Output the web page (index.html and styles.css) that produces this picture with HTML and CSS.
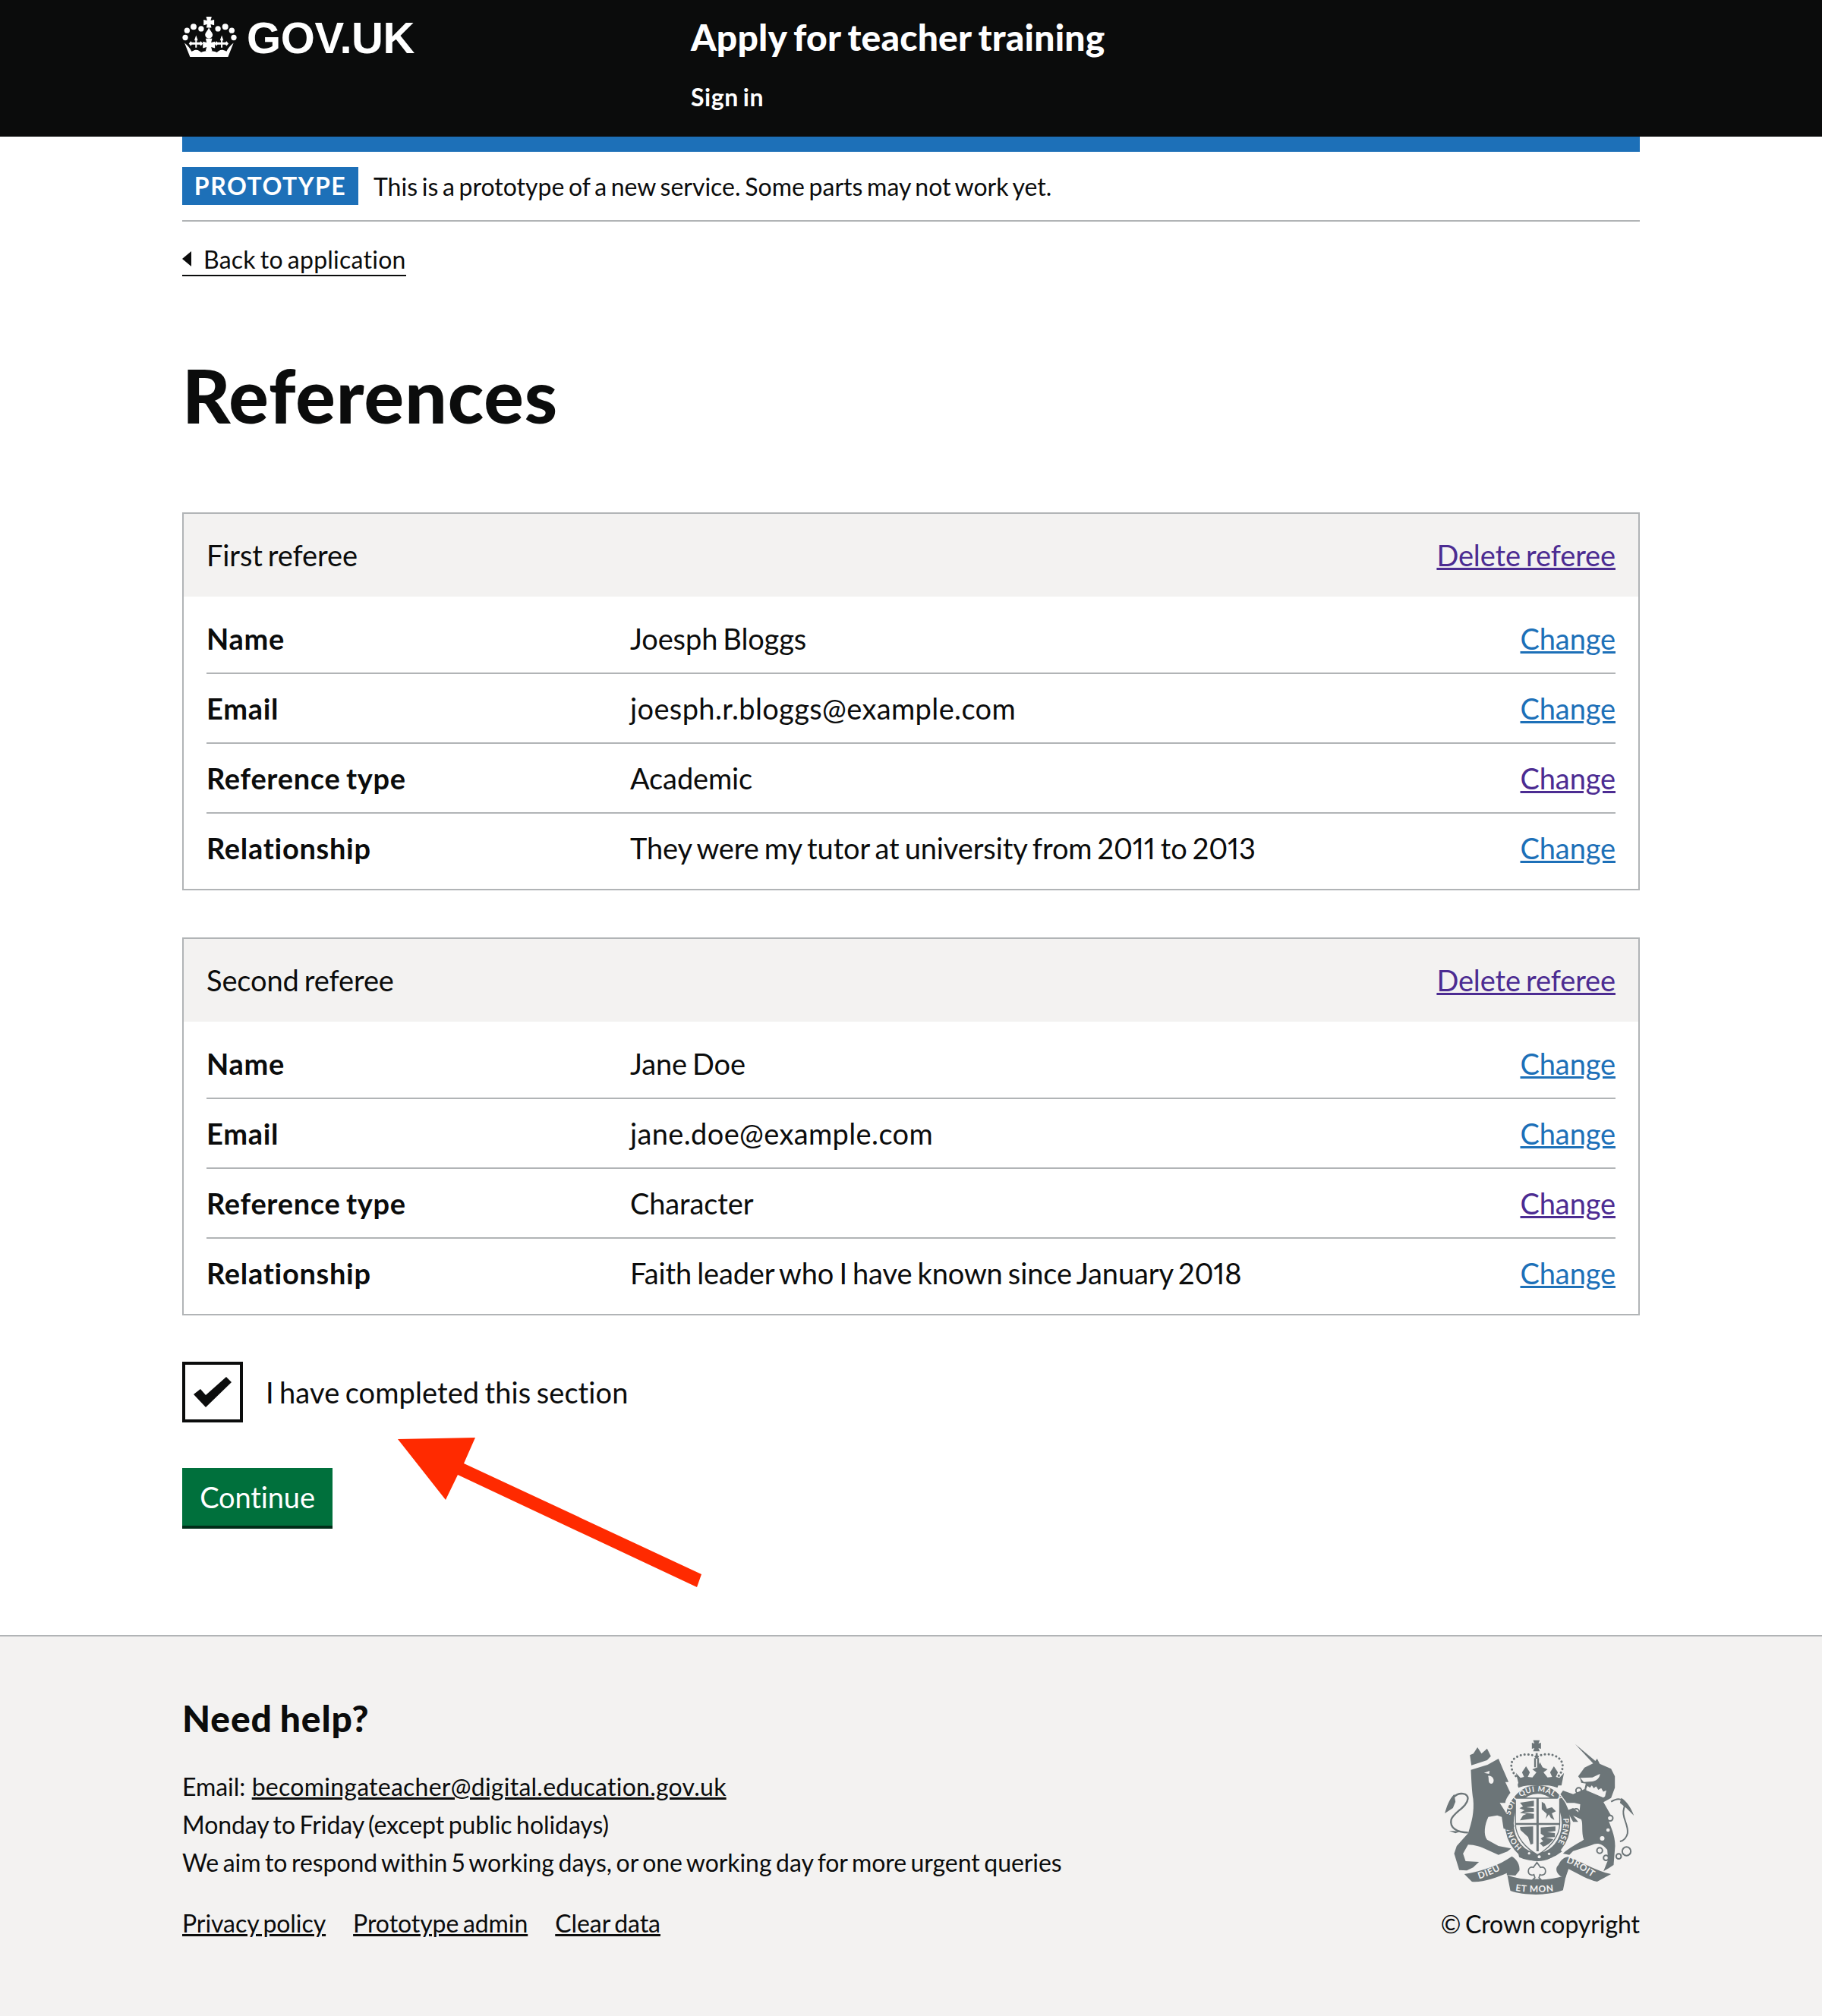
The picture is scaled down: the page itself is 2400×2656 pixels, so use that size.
FILE: index.html
```html
<!DOCTYPE html>
<html lang="en">
<head>
    <meta charset="UTF-8">
    <title>References</title>
    <link rel="stylesheet" href="styles.css">
</head>
<body>
    <header class="site-header">
        <div class="logo">
            <svg class="crown" viewBox="23 8 217 160" fill="#fff">
                <!-- orb cross and drop -->
                <path d="M118 8h22l-4 15 14-3v22l-14-4 3 14h-20l3-14-14 4V20l14 3z"/>
                <path d="M129 50c4 14 15 20 15 30a15 15 0 0 1-30 0c0-10 11-16 15-30z"/>
                <circle cx="68" cy="48" r="12"/><circle cx="98" cy="56" r="11"/>
                <circle cx="165" cy="56" r="11"/><circle cx="194" cy="48" r="12"/>
                <circle cx="42" cy="63" r="11"/><circle cx="220" cy="63" r="11"/>
                <circle cx="35" cy="91" r="11"/><circle cx="228" cy="91" r="11"/>
                <!-- fleurs -->
                <path d="M78 82l7 20h-4v8h12l4-5 8 10-8 9-4-5H81v12h-6v-12H61l-4 5-8-9 8-10 4 5h14v-8h-4z"/>
                <path d="M180 82l7 20h-4v8h12l4-5 8 10-8 9-4-5h-12v12h-6v-12h-14l-4 5-8-9 8-10 4 5h14v-8h-4z"/>
                <path d="M116 95h26l-4 16 15-4v26l-15-4 4 15h-26l4-15-15 4v-26l15 4z"/>
                <!-- bowl -->
                <path d="M32 112c12 10 22 20 28 34 8-4 14-6 18-6 10 0 16 6 20 10 10-4 20-6 31-6s22 2 32 6c4-4 10-10 20-10 4 0 10 2 18 6 6-14 16-24 28-34l-22 56H54z"/>
            </svg>
            <span class="logo-text">GOV.UK</span>
        </div>
        <div class="service">
            <div class="service-name">Apply for teacher training</div>
            <div class="service-nav">Sign in</div>
        </div>
    </header>

    <div class="wrapper">
        <div class="blue-bar"></div>
        <div class="phase-banner">
            <strong class="tag">PROTOTYPE</strong>
            <span>This is a prototype of a new service. Some parts may not work yet.</span>
        </div>
        <a class="back-link" href="#"><span class="back-arrow"></span>Back to application</a>

        <h1>References</h1>

        <section class="card">
            <div class="card-head">
                <span>First referee</span>
                <a class="visited" href="#">Delete referee</a>
            </div>
            <div class="card-body">
                <div class="row"><b>Name</b><span>Joesph Bloggs</span><a href="#">Change</a></div>
                <div class="row"><b>Email</b><span class="email">joesph.r.bloggs@example.com</span><a href="#">Change</a></div>
                <div class="row"><b>Reference type</b><span>Academic</span><a class="visited" href="#">Change</a></div>
                <div class="row"><b>Relationship</b><span>They were my tutor at university from 2011 to 2013</span><a href="#">Change</a></div>
            </div>
        </section>

        <section class="card">
            <div class="card-head">
                <span>Second referee</span>
                <a class="visited" href="#">Delete referee</a>
            </div>
            <div class="card-body">
                <div class="row"><b>Name</b><span>Jane Doe</span><a href="#">Change</a></div>
                <div class="row"><b>Email</b><span class="email">jane.doe@example.com</span><a href="#">Change</a></div>
                <div class="row"><b>Reference type</b><span>Character</span><a class="visited" href="#">Change</a></div>
                <div class="row"><b>Relationship</b><span>Faith leader who I have known since January 2018</span><a href="#">Change</a></div>
            </div>
        </section>

        <div class="complete">
            <div class="checkbox">
                <svg viewBox="0 0 50 40" fill="#0b0c0c"><path d="M0 23l9-7 7 8L43 0l7 7-34 33z"/></svg>
            </div>
            <span>I have completed this section</span>
        </div>
        <a class="button" href="#">Continue</a>
    </div>

    <svg class="arrow" viewBox="0 0 2400 2656"><path fill="#ff2a00" d="M524 1896L626 1894 611 1928 924 2074 918 2091 603 1943 587 1976z"/></svg>

    <footer class="site-footer">
        <div class="footer-main">
            <div>
                <h2>Need help?</h2>
                <p>Email: <a class="email" href="#">becomingateacher@digital.education.gov.uk</a></p>
                <p>Monday to Friday (except public holidays)</p>
                <p>We aim to respond within 5 working days, or one working day for more urgent queries</p>
                <ul class="footer-links">
                    <li><a href="#">Privacy policy</a></li>
                    <li><a href="#">Prototype admin</a></li>
                    <li><a href="#">Clear data</a></li>
                </ul>
            </div>
            <div class="crest-col">
                <svg class="crest" viewBox="130 95 752 612" fill="#6c7578">
                    <defs>
                        <path id="garter-top" d="M392 400C395 340 445 300 500 300S610 345 612 405"/>
                        <path id="garter-right" d="M600 400C606 450 590 500 560 530"/>
                        <path id="garter-left" d="M440 520C415 500 400 470 398 440"/>
                        <path id="ribbon-left" d="M268 645C310 632 350 615 385 590"/>
                        <path id="ribbon-right" d="M612 580C650 590 690 625 732 648"/>
                        <path id="ribbon-mid" d="M412 692C460 700 540 700 590 688"/>
                    </defs>

                    <!-- royal crown -->
                    <path d="M482 97h26l-5 13 10-3v24l-10-3 5 13h-26l5-13-10 3v-24l10 3z"/>
                    <path d="M486 168h7v36h-7zM498 168h7v36h-7z"/>
                    <g fill="none" stroke="#6c7578" stroke-width="9" stroke-linecap="round" stroke-dasharray="0.1 15">
                        <path d="M492 162C475 150 430 148 405 172 388 192 395 220 420 246"/>
                        <path d="M500 162C520 148 565 148 588 172 608 195 598 225 575 246"/>
                    </g>
                    <path d="M492 148h8v22h-8z"/>
                    <path d="M414 226l18 20 14-4-8-18 16-24 15 24-8 18 18 2 16-20-16-12 20-8 10-20 10 20 20 8-16 12 16 20 18-2-8-18 15-24 16 24-8 18 14 4 18-20-10 50H426z"/>
                    <path d="M424 285c-6-14-2-20 6-24 46-14 96-14 142 0 8 4 12 10 6 24-50-18-104-18-154 0z"/>

                    <!-- garter and shield -->
                    <ellipse cx="500" cy="425" rx="112" ry="133" fill="none" stroke="#6c7578" stroke-width="34"/>
                    <path d="M412 326h175v100c0 56-44 100-88 124-42-24-87-68-87-124z" fill="#f3f2f1" stroke="#6c7578" stroke-width="4"/>
                    <path d="M495 326h9v210h-9zM412 424h175v8H412z"/>
                    <path d="M430 344l55-8v22l-30 4 30 4v14l-40 2 40 6v18l-55 8 12-20 14-6-26-4 18-10-20-8 14-8z"/>
                    <path d="M516 340l12 8 8 20 20-6 16 16-16 8 10 26-14-8-8-14-12 18 4-20-20-18z"/>
                    <path d="M430 440l52-2v68l-10 4-10-30-30-28z"/>
                    <path d="M512 442l58-4v18l-32 4 30 4v16l-36 2 30 6c-10 14-24 24-40 30l-14-14 14-8-10-10 14-10-14-10z"/>
                    <path d="M424 530l6 26c40 18 96 18 140-6l20-14-6-6c-40 30-118 30-160 0z" stroke="#6c7578" stroke-width="8"/>
                    <circle cx="466" cy="544" r="5" fill="#f3f2f1"/><circle cx="506" cy="558" r="6" fill="#f3f2f1"/><circle cx="545" cy="546" r="5" fill="#f3f2f1"/>
                    <text class="crest-text crest-small"><textPath href="#garter-top" startOffset="2%">SOIT QUI MAL Y</textPath></text>
                    <text class="crest-text crest-small"><textPath href="#garter-right" startOffset="4%">PENSE</textPath></text>
                    <text class="crest-text crest-small"><textPath href="#garter-left" startOffset="2%">HONI</textPath></text>

                    <!-- lion -->
                    <path d="M236 214L302 194 345 170 362 210 385 262 372 262 392 305C380 320 372 335 372 345L350 345 408 436 396 456 365 446 358 400 340 394 305 400C290 430 285 470 300 490L345 515 395 525 380 537 345 550 300 530C280 520 250 510 225 510L205 545 215 575 268 578 245 600 220 612 190 610 170 545 180 515 225 465C240 420 250 380 245 330 240 300 238 260 236 214z"/>
                    <path d="M238 196L232 156 246 150 262 125 278 150 300 130 315 160 300 176z"/>
                    <path d="M288 226l22-8-2 12zM304 238c10-2 22 6 22 18 0 12-10 16-16 10-6-6-2-18-6-28z" fill="#f3f2f1"/>
                    <g fill="none" stroke="#6c7578" stroke-width="7">
                        <path d="M225 462C180 462 152 442 158 412 166 382 222 362 224 328 224 306 190 300 168 322"/>
                    </g>
                    <path d="M170 310C150 330 140 360 133 386L165 365 175 340zM150 455l45 2-20 8z"/>

                    <!-- unicorn -->
                    <path d="M648 112L735 185 722 192z"/>
                    <path d="M660 240L685 205 720 188 735 170 745 190 790 210 805 240 805 285 790 325 760 342 790 395 775 400C788 440 806 470 806 515L800 590 782 602 760 615 778 570 775 530C755 505 735 500 712 512L640 535 625 550 600 545C625 520 660 505 682 490 672 460 680 425 672 410L640 395 660 420 640 420 615 375 640 365 665 385 668 350 645 345 615 345 590 310 600 296 640 310 685 290 690 268 672 265 668 250z"/>
                    <path d="M690 288l6-14 10 8 8-10 8 12 10-8 8 14 12-6 8 14 14-6-6 28-8 6-70-30z" fill="#f3f2f1" stroke="#6c7578" stroke-width="4"/>
                    <path d="M668 246l48-2 30-14c0 14-12 28-30 30l-34 2z" fill="#f3f2f1"/>
                    <circle cx="755" cy="485" r="9" fill="#f3f2f1"/><circle cx="778" cy="452" r="7" fill="#f3f2f1"/>
                    <g fill="none" stroke="#6c7578" stroke-width="6">
                        <path d="M790 340C830 315 850 340 840 370 830 400 860 430 855 465 852 480 840 495 825 497"/>
                        <circle cx="662" cy="296" r="11"/><circle cx="652" cy="380" r="12"/><circle cx="786" cy="405" r="11"/>
                        <circle cx="745" cy="533" r="11"/><circle cx="770" cy="562" r="10"/><circle cx="820" cy="556" r="10"/><circle cx="851" cy="536" r="17"/>
                    </g>
                    <path d="M830 325C850 335 870 365 880 395L850 365 825 345z"/>

                    <!-- motto -->
                    <path d="M210 626C280 615 350 590 398 556 420 570 430 590 428 612L412 632 378 630 378 622C340 640 280 660 240 656z"/>
                    <path d="M582 590C590 572 604 560 620 558 680 580 730 615 790 626L735 656C700 650 660 625 622 606L610 640 590 634C570 620 570 600 582 590z"/>
                    <path d="M380 630C440 655 550 655 612 630L600 690C540 712 450 712 392 692z"/>
                    <path d="M497 580l14 20c10-4 20 2 20 14 0 16-14 18-22 14l-4 12 8 8h-32l8-8-4-12c-8 4-22 2-22-14 0-12 10-18 20-14z" fill="#f3f2f1" stroke="#6c7578" stroke-width="5"/>
                    <text class="crest-text"><textPath href="#ribbon-left">DIEU</textPath></text>
                    <text class="crest-text"><textPath href="#ribbon-right">DROIT</textPath></text>
                    <text class="crest-text"><textPath href="#ribbon-mid">ET MON</textPath></text>
                </svg>
                <div class="copyright">© Crown copyright</div>
            </div>
        </div>
    </footer>
</body>
</html>
```

FILE: styles.css
```css
* {
    box-sizing: border-box;
}
body {
    margin: 0;
    font-family: "Lato", sans-serif;
    font-size: 38px;
    letter-spacing: -0.12px;
    word-spacing: -2.5px;
    font-variant-numeric: proportional-nums;
    color: #0b0c0c;
    background: #fff;
    position: relative;
}
a {
    color: #1d70b8;
}
a.visited {
    color: #4c2c92;
}
.site-header {
    height: 180px;
    background: #0b0c0c;
    color: #fff;
    padding: 0 240px;
    display: flex;
}
.logo {
    width: 670px;
    display: flex;
    align-items: flex-start;
    padding-top: 22px;
}
.crown {
    width: 72px;
    height: 53px;
}
.logo-text {
    font-family: "Liberation Sans", sans-serif;
    font-weight: 700;
    font-size: 58px;
    line-height: 56px;
    margin-left: 13px;
    letter-spacing: -0.4px;
    word-spacing: 0;
}
.service-name {
    font-weight: 900;
    font-size: 48px;
    line-height: 60px;
    padding-top: 19px;
    letter-spacing: 0.2px;
}
.service-nav {
    font-weight: 700;
    font-size: 32px;
    line-height: 40px;
    letter-spacing: 0.6px;
    margin-top: 29px;
}
.wrapper {
    width: 1920px;
    margin: 0 auto;
    padding-bottom: 140px;
}
.blue-bar {
    height: 20px;
    background: #1d70b8;
}
.phase-banner {
    display: flex;
    align-items: center;
    height: 92px;
    border-bottom: 2px solid #b1b4b6;
    padding-bottom: 20px;
    padding-top: 20px;
    font-size: 32px;
    letter-spacing: 0;
}
.tag {
    background: #1d70b8;
    color: #fff;
    width: 232px;
    height: 50px;
    line-height: 50px;
    text-align: center;
    letter-spacing: 1.5px;
    font-size: 32px;
    margin-right: 20px;
}
.back-link {
    display: inline-flex;
    align-items: center;
    margin-top: 30px;
    height: 42px;
    padding-bottom: 2px;
    font-size: 32px;
    letter-spacing: 0.25px;
    color: #0b0c0c;
    text-decoration: none;
    border-bottom: 2px solid #0b0c0c;
}
.back-arrow {
    width: 0;
    height: 0;
    border-top: 10px solid transparent;
    border-bottom: 10px solid transparent;
    border-right: 12px solid #0b0c0c;
    margin-right: 16px;
}
h1 {
    font-size: 98px;
    font-weight: 900;
    line-height: 100px;
    letter-spacing: 1px;
    margin: 106px 0 105px;
}
.card {
    border: 2px solid #b1b4b6;
    margin-bottom: 62px;
}
.card-head {
    height: 109px;
    background: #f3f2f1;
    padding: 0 30px 2px;
    display: flex;
    justify-content: space-between;
    align-items: center;
}
.card-body {
    padding: 10px 30px 7px;
}
.row {
    display: flex;
    height: 92px;
    padding-bottom: 1px;
    align-items: center;
    border-bottom: 2px solid #b1b4b6;
}
.row:last-child {
    border-bottom: 0;
    padding-bottom: 3px;
}
.row b {
    width: 558px;
    letter-spacing: 0.7px;
}
.row span {
    flex: 1;
}
.row .email {
    letter-spacing: 0.37px;
}
.complete {
    display: flex;
    align-items: center;
    height: 80px;
    margin-top: -1px;
    letter-spacing: 0.1px;
}
.checkbox {
    width: 80px;
    height: 80px;
    border: 4px solid #0b0c0c;
    margin-right: 30px;
    display: flex;
    align-items: center;
    justify-content: center;
}
.checkbox svg {
    width: 50px;
    height: 40px;
}
.button {
    display: block;
    width: 198px;
    height: 80px;
    margin-top: 60px;
    line-height: 76px;
    text-align: center;
    color: #fff;
    text-decoration: none;
    background: #00703c;
    box-shadow: inset 0 -4px 0 #002d18;
}
.arrow {
    position: absolute;
    left: 0;
    top: 0;
    width: 2400px;
    height: 2656px;
    pointer-events: none;
}
.site-footer {
    background: #f3f2f1;
    border-top: 2px solid #b1b4b6;
    height: 502px;
    padding: 0 240px;
    font-size: 32px;
    letter-spacing: -0.07px;
}
.footer-main {
    display: flex;
    justify-content: space-between;
}
.site-footer h2 {
    font-size: 48px;
    font-weight: 900;
    line-height: 60px;
    letter-spacing: 0.9px;
    margin: 78px 0 35px;
}
.site-footer p {
    margin: 0;
    line-height: 50px;
}
.site-footer a {
    color: #0b0c0c;
}
.site-footer .email {
    letter-spacing: 0.25px;
    margin-left: 3px;
}
.footer-links {
    list-style: none;
    display: flex;
    gap: 36px;
    margin: 30px 0 0;
    padding: 0;
    line-height: 50px;
}
.crest-col {
    display: flex;
    flex-direction: column;
    align-items: flex-end;
    padding-top: 136px;
}
.crest {
    width: 251px;
    height: 204px;
    margin-right: 7px;
}
.crest-text {
    fill: #f3f2f1;
    font-size: 36px;
    font-weight: 700;
    letter-spacing: 2px;
    word-spacing: 0;
}
.crest-small {
    font-size: 30px;
}
.copyright {
    margin-top: 14px;
    line-height: 50px;
}
```
